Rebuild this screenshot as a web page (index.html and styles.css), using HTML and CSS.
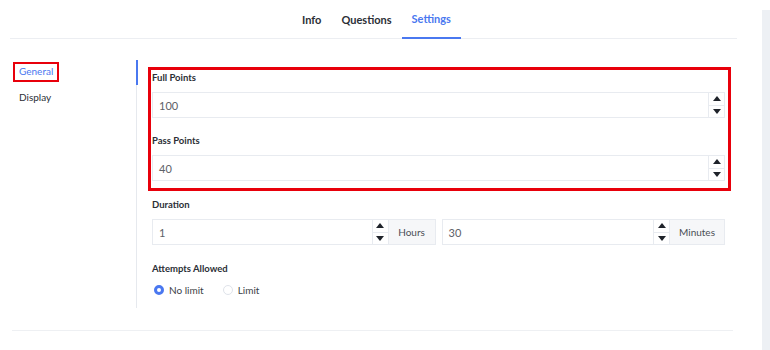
FILE: index.html
```html
<!DOCTYPE html>
<html>
<head>
<meta charset="utf-8">
<link rel="stylesheet" href="styles.css">
</head>
<body>
<div class="page">
  <div class="main">
    <div class="tabs">
      <div class="tab">Info</div>
      <div class="tab">Questions</div>
      <div class="tab active">Settings</div>
    </div>
    <div class="body">
      <div class="sidenav">
        <div class="nav-item active"><span class="mark">General</span></div>
        <div class="nav-item">Display</div>
      </div>
      <div class="content">
        <div class="highlight">
          <div class="label">Full Points</div>
          <div class="input-row">
            <div class="input"><span class="value">100</span><div class="spin"><span class="up"></span><span class="down"></span></div></div>
          </div>
          <div class="label gap">Pass Points</div>
          <div class="input-row">
            <div class="input"><span class="value">40</span><div class="spin"><span class="up"></span><span class="down"></span></div></div>
          </div>
        </div>
        <div class="label dur">Duration</div>
        <div class="input-row split">
          <div class="group">
            <div class="input"><span class="value">1</span><div class="spin"><span class="up"></span><span class="down"></span></div></div>
            <div class="addon hours">Hours</div>
          </div>
          <div class="group">
            <div class="input"><span class="value">30</span><div class="spin"><span class="up"></span><span class="down"></span></div></div>
            <div class="addon minutes">Minutes</div>
          </div>
        </div>
        <div class="label att">Attempts Allowed</div>
        <div class="radios">
          <label class="radio"><span class="dot checked"></span>No limit</label>
          <label class="radio"><span class="dot"></span>Limit</label>
        </div>
      </div>
    </div>
    <div class="footer-line"></div>
  </div>
  <div class="scrollbar"></div>
</div>
</body>
</html>
```
FILE: styles.css
```css
* { box-sizing: border-box; }
html, body { margin: 0; padding: 0; background: #fff; }
body {
  font-family: Lato, "Open Sans", sans-serif;
  color: #2b2f36;
  width: 770px;
  height: 350px;
  overflow: hidden;
}
.page { display: flex; height: 350px; }
.main { width: 727px; margin-left: 10px; }
.scrollbar { width: 8px; margin-left: 25px; margin-top: 10px; background: #edf0f4; height: 340px; }

.tabs {
  height: 39px;
  display: flex;
  padding-left: 282px;
  border-bottom: 1px solid #eceef2;
}
.tab {
  padding: 0 10px;
  font-size: 11px;
  font-weight: 700;
  line-height: 39px;
  color: #2b2f36;
  margin-right: 0;
}
.tab.active { color: #4a78f0; border-bottom: 2px solid #4a78f0; line-height: 38px; height: 39px; }

.body { display: flex; padding-top: 21px; }
.sidenav { width: 126px; padding-left: 3px; }
.nav-item { font-size: 10px; line-height: 14px; padding-left: 6px; color: #2b2f36; }
.nav-item.active { padding-left: 0; padding-top: 2px; height: 30px; }
.mark { display: inline-block; border: 2px solid #e8000b; padding: 1px 4px 2px; line-height: 13px; color: #4a78f0; }

.content {
  flex: 1;
  border-left: 1px solid #e6e9ee;
  padding: 7px 12px 11px 15px;
  position: relative;
}
.content::before {
  content: "";
  position: absolute;
  left: -1px; top: 0;
  width: 2px; height: 25px;
  background: #4a78f0;
}
.highlight {
  border: 3px solid #e8000b;
  margin-left: -4px;
  margin-right: -6px;
  padding: 1px 3px 7px 1px;
}
.label { font-size: 9.5px; font-weight: 700; line-height: 14px; color: #2b2f36; margin-bottom: 7px; }
.label.gap { margin-top: 16px; }
.label.dur { margin-top: 7px; }
.label.att { margin-top: 17px; }

.input-row { display: flex; }
.input {
  flex: 1;
  height: 26px;
  border: 1px solid #e8ebf0;
  display: flex;
  align-items: center;
  background: #fff;
}
.value { flex: 1; padding-left: 6px; font-size: 11px; color: #5d6168; }
.spin {
  width: 16px;
  height: 100%;
  border-left: 1px solid #e8ebf0;
  display: flex;
  flex-direction: column;
}
.spin span { flex: 1; display: flex; align-items: center; justify-content: center; }
.spin .up { border-bottom: 1px solid #e8ebf0; }
.spin .up::after {
  content: ""; border-left: 4px solid transparent; border-right: 4px solid transparent;
  border-bottom: 5px solid #1f232a;
}
.spin .down::after {
  content: ""; border-left: 4px solid transparent; border-right: 4px solid transparent;
  border-top: 5px solid #1f232a;
}
.split { gap: 6px; }
.group { display: flex; flex: 1; }
.addon {
  height: 26px;
  border: 1px solid #e8ebf0;
  border-left: none;
  background: #f6f7f9;
  font-size: 10px;
  color: #4a4e55;
  display: flex;
  align-items: center;
  justify-content: center;
}
.hours { width: 47px; }
.minutes { width: 55px; }

.radios { display: flex; gap: 19px; padding-left: 2px; margin-top: 1px; }
.radio { display: flex; align-items: center; font-size: 10px; color: #3b3f46; line-height: 14px; }
.dot {
  width: 10px; height: 10px; border-radius: 50%;
  border: 1px solid #dfe3ea;
  margin-right: 5px;
  background: #fff;
}
.dot.checked { border: 3px solid #4a78f0; }

.footer-line { margin-top: 22px; margin-left: 2px; margin-right: 4px; height: 1px; background: #eef0f3; }
```
